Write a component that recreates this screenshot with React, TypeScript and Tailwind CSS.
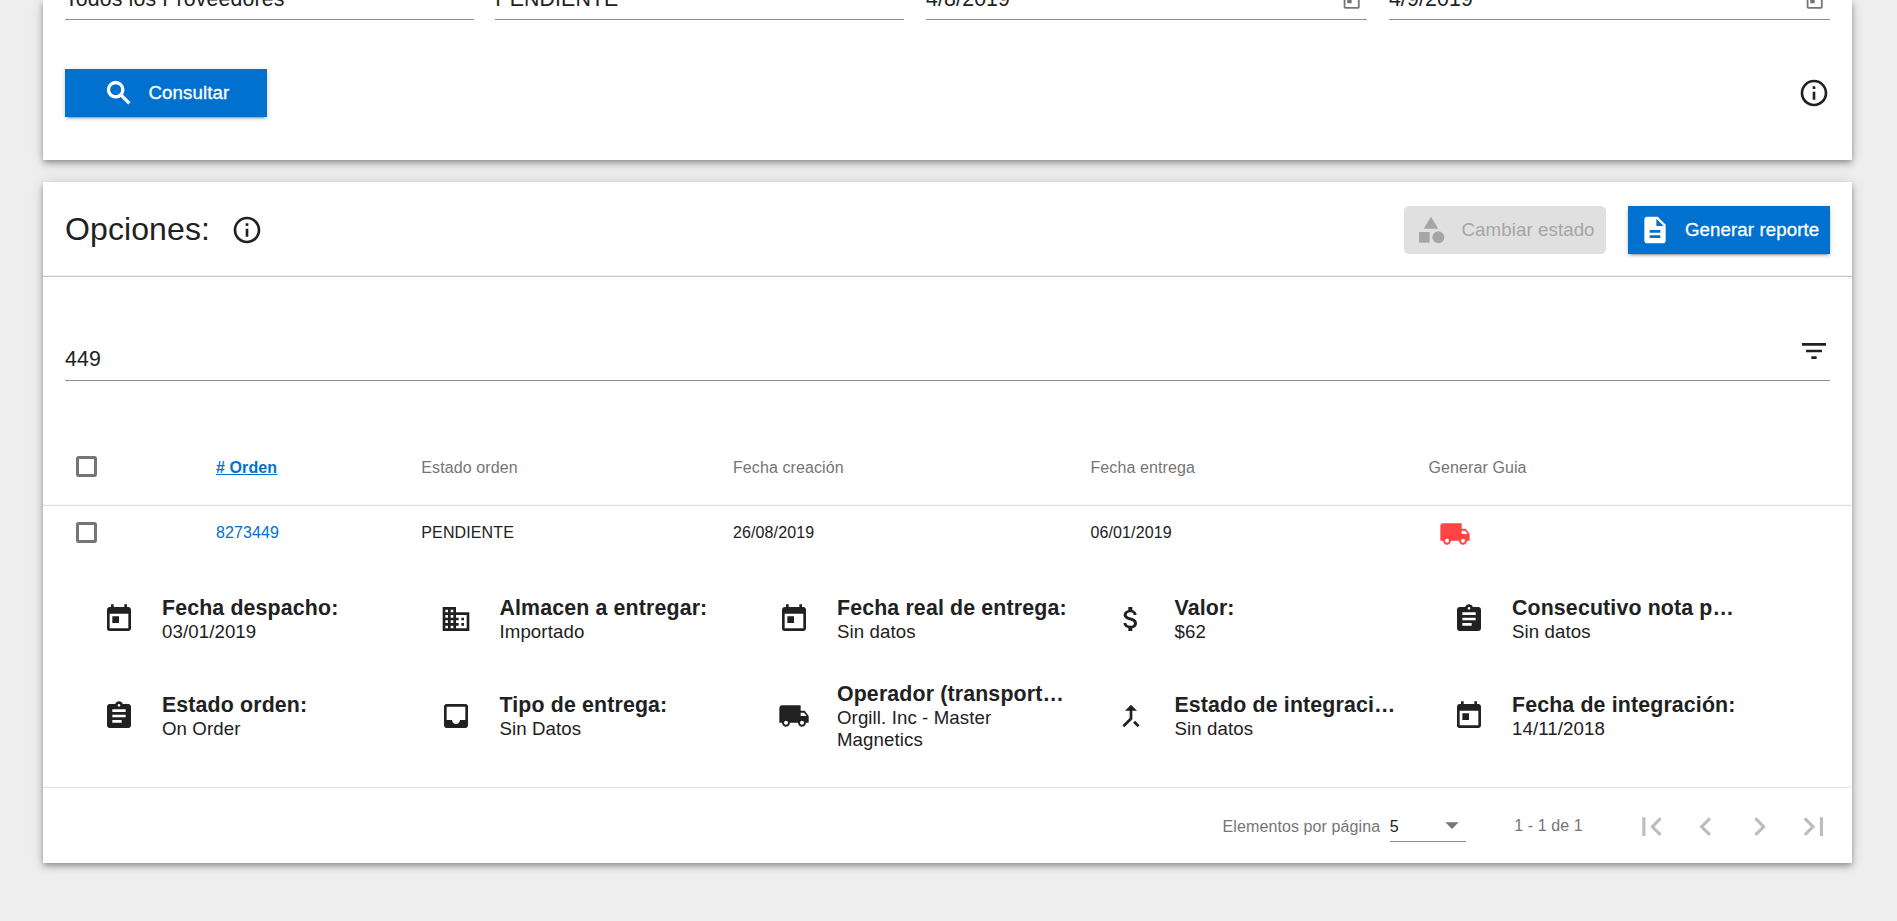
import type { ReactNode } from "react";
import type { IconType } from "react-icons";
import {
  MdArrowDropDown,
  MdAssignment,
  MdAttachMoney,
  MdCallMerge,
  MdCategory,
  MdChevronLeft,
  MdChevronRight,
  MdDescription,
  MdDomain,
  MdFilterList,
  MdFirstPage,
  MdInbox,
  MdInfoOutline,
  MdLastPage,
  MdLocalShipping,
  MdToday,
} from "react-icons/md";

type Detail = { icon: IconType; label: string; value: string };

const details: Detail[] = [
  { icon: MdToday, label: "Fecha despacho:", value: "03/01/2019" },
  { icon: MdDomain, label: "Almacen a entregar:", value: "Importado" },
  { icon: MdToday, label: "Fecha real de entrega:", value: "Sin datos" },
  { icon: MdAttachMoney, label: "Valor:", value: "$62" },
  { icon: MdAssignment, label: "Consecutivo nota p…", value: "Sin datos" },
  { icon: MdAssignment, label: "Estado orden:", value: "On Order" },
  { icon: MdInbox, label: "Tipo de entrega:", value: "Sin Datos" },
  { icon: MdLocalShipping, label: "Operador (transport…", value: "Orgill. Inc - Master Magnetics" },
  { icon: MdCallMerge, label: "Estado de integraci…", value: "Sin datos" },
  { icon: MdToday, label: "Fecha de integración:", value: "14/11/2018" },
];

const CARD =
  "bg-white shadow-[0_2.67px_5.33px_-1.33px_rgba(0,0,0,0.28),0_5.33px_6.67px_0_rgba(0,0,0,0.16),0_1.33px_13.33px_0_rgba(0,0,0,0.14)]";
const RAISED =
  "bg-[#0071ce] text-white shadow-[0_4px_1.33px_-2.67px_rgba(0,0,0,0.2),0_2.67px_2.67px_0_rgba(0,0,0,0.14),0_1.33px_6.67px_0_rgba(0,0,0,0.12)]";
const COLUMNS = "grid grid-cols-[173px_205.3px_311.7px_357.5px_338px_1fr] items-center";

function SearchIcon() {
  return (
    <svg viewBox="0 0 24 24" className="size-8 fill-none stroke-current stroke-[2.5]">
      <circle cx="9.5" cy="9.5" r="5.4" />
      <path d="M13.6 13.6 19.8 19.8" />
    </svg>
  );
}

function Field({ children, calendar }: { children: ReactNode; calendar?: boolean }) {
  return (
    <div className="flex h-5 items-end justify-between border-b border-[#8f8f8f] pb-[8px]">
      <span className="text-[21.33px] leading-6 tracking-[0.12px]">{children}</span>
      {calendar && <MdToday className="mr-[5px] size-[21.33px] shrink-0 text-[#757575]" />}
    </div>
  );
}

function Checkbox({ className = "" }: { className?: string }) {
  return (
    <div className={`ml-[33px] size-[21px] rounded-[2.67px] border-[3px] border-[#757575] ${className}`} />
  );
}

export default function App() {
  return (
    <div className="h-[921px] overflow-hidden bg-[#eeeeee] pr-[45px] pl-[43px] font-['Liberation_Sans',Arial,sans-serif] text-[#212121]">
      <section className={`h-[160px] px-[22px] ${CARD}`}>
        <div className="grid grid-cols-[408.5px_409px_441px_441px] gap-x-[21.8px]">
          <Field>Todos los Proveedores</Field>
          <Field>PENDIENTE</Field>
          <Field calendar>4/8/2019</Field>
          <Field calendar>4/9/2019</Field>
        </div>
        <div className="mt-[49px] flex items-center justify-between">
          <button className={`flex h-12 w-[202px] items-center pl-[37.5px] text-[18.67px] ${RAISED}`}>
            <SearchIcon />
            <span className="ml-[14px] tracking-[0.1px] [-webkit-text-stroke:0.3px]">Consultar</span>
          </button>
          <MdInfoOutline className="size-8" />
        </div>
      </section>

      <section className={`mt-[22px] h-[681px] ${CARD}`}>
        <header className="flex h-[95px] items-center border-b border-[#c8c8c8] px-[22px] pt-[2px] shadow-[inset_0_-1px_0_#efefef]">
          <h1 className="-mt-[2px] text-[32px] leading-[48px] tracking-[0.1px]">Opciones:</h1>
          <MdInfoOutline className="ml-[21px] size-8" />
          <button className="ml-auto flex h-12 w-[202px] items-center rounded-[5.33px] bg-[#e0e0e0] pl-[11px] text-[18.67px] text-[#a6a6a6]">
            <MdCategory className="size-8" />
            <span className="ml-[14.5px] tracking-[0.1px]">Cambiar estado</span>
          </button>
          <button className={`ml-[22px] flex h-12 w-[202px] items-center pl-[10.67px] text-[18.67px] ${RAISED}`}>
            <MdDescription className="size-8" />
            <span className="ml-[14.33px] tracking-[0.1px] [-webkit-text-stroke:0.3px]">Generar reporte</span>
          </button>
        </header>

        <div className="mx-[22px] flex h-[104px] items-end justify-between border-b border-[#8f8f8f]">
          <span className="pb-[9px] text-[21.33px] leading-6 tracking-[0.1px]">449</span>
          <MdFilterList className="mb-[13px] size-8" />
        </div>

        <div className={`mt-[50px] mr-px h-[75px] border-b border-[#e0e0e0] text-[16px] tracking-[0.1px] text-[#757575] shadow-[inset_0_-1px_0_#f6f6f6] ${COLUMNS}`}>
          <Checkbox className="-mt-[3px]" />
          <span className="font-bold text-[#0071ce] underline">
            # Orden
          </span>
          <span>Estado orden</span>
          <span>Fecha creación</span>
          <span>Fecha entrega</span>
          <span>Generar Guia</span>
        </div>
        <div className={`h-[53px] text-[16px] tracking-[0.12px] ${COLUMNS}`}>
          <Checkbox />
          <span className="text-[#0071ce]">8273449</span>
          <span>PENDIENTE</span>
          <span>26/08/2019</span>
          <span>06/01/2019</span>
          <MdLocalShipping className="ml-[10.5px] mt-[2px] size-8 text-[#ff4444]" />
        </div>

        <ul className="mt-[11.5px] ml-[42px] grid auto-rows-[97px] grid-cols-[repeat(5,337.5px)]">
          {details.map(({ icon: Icon, label, value }) => (
            <li key={label} className="flex items-center pl-[17.67px]">
              <Icon className="size-8 shrink-0" />
              <div className="ml-[27.3px] w-[232px]">
                <p className="text-[21.33px] leading-[25px] font-bold tracking-[0.15px] whitespace-nowrap">{label}</p>
                <p className="text-[18.67px] leading-[22px] tracking-[0.1px]">{value}</p>
              </div>
            </li>
          ))}
        </ul>

        <footer className="mt-[22.5px] mr-px flex h-[76px] items-center border-t border-[#e0e0e0] pr-[18.5px] text-[16px] tracking-[0.1px] text-[#757575]">
          <span className="mt-[2px] ml-auto">Elementos por página</span>
          <div className="ml-[9.5px] flex h-[33px] w-[76px] items-center justify-between border-b border-[#8f8f8f] text-[#212121]">
            <span className="mt-[3px]">5</span>
            <MdArrowDropDown className="-mr-[2.5px] size-8 text-[#757575]" />
          </div>
          <span className="ml-[48.5px] w-[119px]">1 - 1 de 1</span>
          <div className="mt-[2px] flex gap-[16.67px] text-[#bdbdbd]">
            <MdFirstPage className="size-[37.33px]" />
            <MdChevronLeft className="size-[37.33px]" />
            <MdChevronRight className="size-[37.33px]" />
            <MdLastPage className="size-[37.33px]" />
          </div>
        </footer>
      </section>
    </div>
  );
}
